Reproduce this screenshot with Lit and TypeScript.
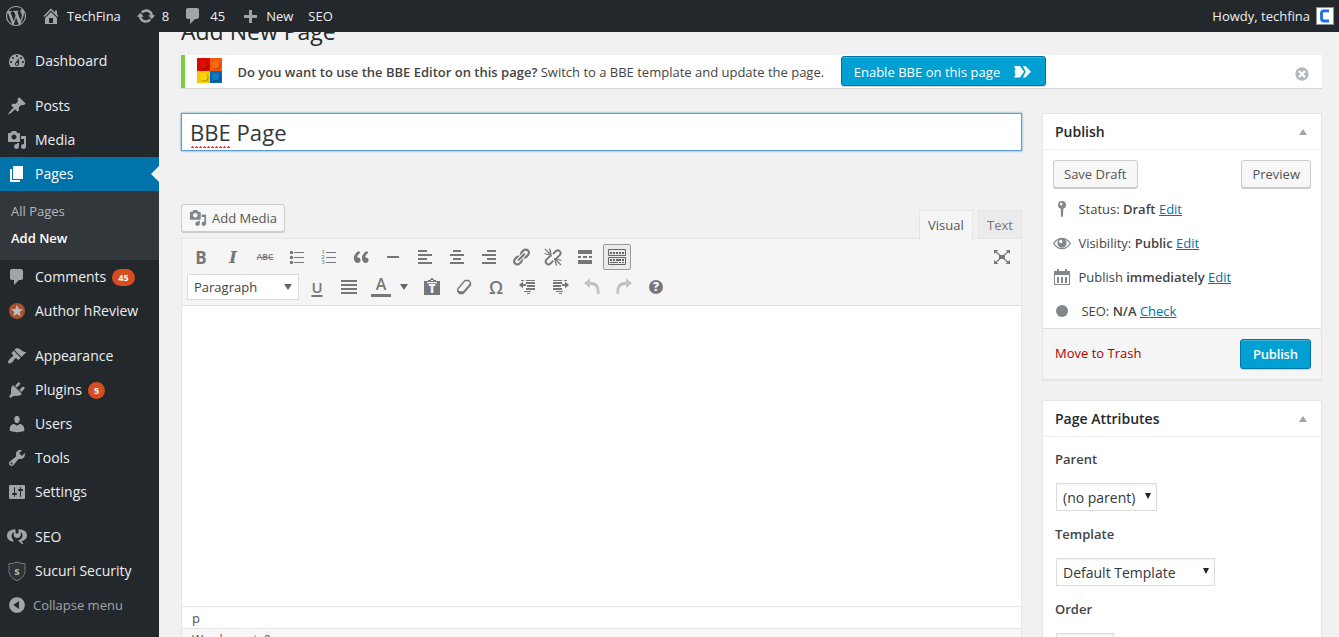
import { LitElement, html, svg, css } from "lit";
import { customElement } from "lit/decorators.js";
import { classMap } from "lit/directives/class-map.js";

const P: Record<string, string> = {
  wordpress: "M20 10c0-5.51-4.49-10-10-10C4.48 0 0 4.49 0 10c0 5.52 4.48 10 10 10 5.51 0 10-4.48 10-10zM7.78 15.37L4.37 6.22c.55-.02 1.17-.08 1.17-.08.5-.06.44-1.13-.06-1.11 0 0-1.45.11-2.37.11-.18 0-.37 0-.58-.01C4.12 2.69 6.87 1.11 10 1.11c2.33 0 4.45.87 6.05 2.34-.68-.11-1.65.39-1.65 1.58 0 .74.45 1.36.9 2.1.35.61.55 1.36.55 2.46 0 1.49-1.4 5-1.4 5l-3.03-8.37c.54-.02.82-.17.82-.17.5-.05.44-1.25-.06-1.22 0 0-1.44.12-2.38.12-.87 0-2.33-.12-2.33-.12-.5-.03-.56 1.2-.06 1.22l.92.08 1.26 3.41zM17.41 10c.24-.64.74-1.87.43-4.25.7 1.29 1.05 2.71 1.05 4.25 0 3.29-1.73 6.24-4.4 7.78.97-2.59 1.94-5.2 2.92-7.78zM6.1 18.09C3.12 16.65 1.11 13.53 1.11 10c0-1.3.23-2.48.72-3.59C3.25 10.3 4.67 14.2 6.1 18.09zm4.03-6.63l2.58 6.98c-.86.29-1.76.45-2.71.45-.79 0-1.57-.11-2.29-.33.81-2.38 1.62-4.74 2.42-7.1z",
  home: "M16 8.5l1.53 1.53-1.06 1.06L10 4.6l-6.47 6.49-1.06-1.06L10 2.5l4 4v-2h2v4zm-6-2.46l6 5.99V18H4v-5.97zM12 17v-5H8v5h4z",
  update: "M10.2 3.28c3.53 0 6.43 2.61 6.92 6h2.08l-3.5 4-3.5-4h2.32c-.45-1.97-2.21-3.45-4.32-3.45-1.45 0-2.73.71-3.54 1.78L4.95 5.66C6.23 4.2 8.11 3.28 10.2 3.28zm-.4 13.44c-3.52 0-6.43-2.61-6.92-6H.8l3.5-4c1.17 1.33 2.33 2.67 3.5 4H5.48c.45 1.97 2.21 3.45 4.32 3.45 1.45 0 2.73-.71 3.54-1.78l1.71 1.95c-1.28 1.46-3.15 2.38-5.25 2.38z",
  comments: "M5 2h9c1.1 0 2 .9 2 2v7c0 1.1-.9 2-2 2h-2l-5 5v-5H5c-1.1 0-2-.9-2-2V4c0-1.1.9-2 2-2z",
  plus: "M17 9v3h-5v5H9v-5H4V9h5V4h3v5h5z",
  dashboard: "M3.76 16h12.48c1.1-1.37 1.76-3.11 1.76-5 0-4.42-3.58-8-8-8s-8 3.58-8 8c0 1.89.66 3.63 1.76 5zM10 4c.55 0 1 .45 1 1s-.45 1-1 1-1-.45-1-1 .45-1 1-1zM6 6c.55 0 1 .45 1 1s-.45 1-1 1-1-.45-1-1 .45-1 1-1zm8 0c.55 0 1 .45 1 1s-.45 1-1 1-1-.45-1-1 .45-1 1-1zm-5.37 5.55L12 7v6c0 1.1-.9 2-2 2s-2-.9-2-2c0-.57.24-1.08.63-1.45zM4 10c.55 0 1 .45 1 1s-.45 1-1 1-1-.45-1-1 .45-1 1-1zm12 0c.55 0 1 .45 1 1s-.45 1-1 1-1-.45-1-1 .45-1 1-1zm-5 3c0-.55-.45-1-1-1s-1 .45-1 1 .45 1 1 1 1-.45 1-1z",
  post: "M10.44 3.02l1.82-1.82 6.36 6.35-1.83 1.82c-1.05-.68-2.48-.57-3.41.36l-.75.75c-.92.93-1.04 2.35-.35 3.41l-1.83 1.82-2.41-2.41-2.8 2.79c-.42.42-3.38 2.71-3.8 2.29s1.86-3.39 2.28-3.81l2.79-2.79L4.1 9.36l1.83-1.82c1.05.69 2.48.57 3.4-.36l.75-.75c.93-.92 1.05-2.35.36-3.41z",
  media: "M13 11V4c0-.55-.45-1-1-1h-1.67L9 1H5L3.67 3H2c-.55 0-1 .45-1 1v7c0 .55.45 1 1 1h10c.55 0 1-.45 1-1zM7 4.5c1.38 0 2.5 1.12 2.5 2.5S8.38 9.5 7 9.5 4.5 8.38 4.5 7 5.62 4.5 7 4.5zM14 6h5v10.5c0 1.38-1.12 2.5-2.5 2.5S14 17.88 14 16.5s1.12-2.5 2.5-2.5c.17 0 .34.02.5.05V9h-3V6zm-4 8.05V13h2v3.5c0 1.38-1.12 2.5-2.5 2.5S7 17.88 7 16.5 8.12 14 9.5 14c.17 0 .34.02.5.05z",
  page: "M6 15V2h10v13H6zm-1 1h8v2H3V5h2v11z",
  appearance: "M14.48 11.06L7.41 3.99l1.5-1.5c.5-.56 2.3-.47 3.51.32 1.21.8 1.43 1.28 2.91 2.1 1.18.64 2.45 1.26 4.45.85zm-.71.71L6.7 4.7 4.93 6.47c-.39.39-.39 1.02 0 1.41l1.06 1.06c.39.39.39 1.03 0 1.42-.6.6-1.43 1.11-2.21 1.69-.35.26-.7.53-1.01.84C1.43 14.23.4 16.08 1.4 17.07c.99 1 2.84-.03 4.18-1.36.31-.31.58-.66.85-1.02.57-.78 1.08-1.61 1.69-2.21.39-.39 1.02-.39 1.41 0l1.06 1.06c.39.39 1.02.39 1.41 0z",
  plugins: "M13.11 4.36L9.87 7.6 8 5.73l3.24-3.24c.35-.34 1.05-.2 1.56.32.52.51.66 1.21.31 1.55zm-8 1.77l.91-1.12 9.01 9.01-1.19.84c-.71.71-2.63 1.16-3.82 1.16H6.14L4.9 17.26c-.59.59-1.54.59-2.12 0-.59-.58-.59-1.53 0-2.12l1.24-1.24v-3.88c0-1.13.4-3.19 1.09-3.89zm7.26 3.97l3.24-3.24c.34-.35 1.04-.21 1.55.31.52.51.66 1.21.31 1.55l-3.24 3.25z",
  users: "M10 9.25c-2.27 0-2.73-3.44-2.73-3.44C7 4.02 7.82 2 9.97 2c2.16 0 2.98 2.02 2.71 3.81 0 0-.41 3.44-2.68 3.44zm0 2.57L12.72 10c2.39 0 4.52 2.33 4.52 4.53v2.49s-3.65 1.13-7.24 1.13c-3.65 0-7.24-1.13-7.24-1.13v-2.49c0-2.25 1.94-4.48 4.47-4.48z",
  tools: "M16.68 9.77c-1.34 1.34-3.3 1.67-4.95.99l-5.41 6.52c-.99.99-2.59.99-3.58 0s-.99-2.59 0-3.57l6.52-5.42c-.68-1.65-.35-3.61.99-4.95 1.28-1.28 3.12-1.62 4.72-1.06l-2.89 2.89 2.82 2.82 2.86-2.87c.53 1.58.18 3.39-1.08 4.65zM3.81 16.21c.4.39 1.04.39 1.43 0 .4-.4.4-1.04 0-1.43-.39-.4-1.03-.4-1.43 0-.39.39-.39 1.03 0 1.43z",
  settings: "M18 16V4c0-.55-.45-1-1-1H3c-.55 0-1 .45-1 1v12c0 .55.45 1 1 1h14c.55 0 1-.45 1-1zM8 11h1c.55 0 1 .45 1 1s-.45 1-1 1H8v1.5c0 .28-.22.5-.5.5s-.5-.22-.5-.5V13H6c-.55 0-1-.45-1-1s.45-1 1-1h1V5.5c0-.28.22-.5.5-.5s.5.22.5.5V11zm5-2h-1c-.55 0-1-.45-1-1s.45-1 1-1h1V5.5c0-.28.22-.5.5-.5s.5.22.5.5V7h1c.55 0 1 .45 1 1s-.45 1-1 1h-1v5.500c0 .28-.22.5-.5.5s-.5-.22-.5-.5V9z",
  collapse: "M10 2.16c4.33 0 7.84 3.51 7.84 7.84s-3.51 7.84-7.84 7.84S2.16 14.33 2.16 10 5.71 2.16 10 2.16zm2 11.72V6.12L6.18 9.97z",
  link: "M17.74 2.76c1.68 1.69 1.68 4.41 0 6.1l-1.53 1.52c-1.12 1.12-2.7 1.47-4.14 1.09l2.62-2.61.76-.77.76-.76c.84-.84.84-2.2 0-3.04-.84-.85-2.2-.85-3.04 0l-.77.76-3.38 3.38c-.37-1.44-.02-3.02 1.1-4.14l1.52-1.53c1.69-1.68 4.42-1.68 6.1 0zM8.59 13.43l5.34-5.34c.42-.42.42-1.1 0-1.52-.44-.43-1.13-.39-1.53 0l-5.33 5.34c-.42.42-.42 1.1 0 1.52.44.43 1.13.39 1.52 0zm-.76 2.29l4.14-4.15c.38 1.44.03 3.02-1.09 4.14l-1.52 1.53c-1.69 1.68-4.41 1.68-6.1 0-1.68-1.68-1.68-4.42 0-6.1l1.53-1.52c1.12-1.12 2.7-1.47 4.14-1.1l-4.14 4.15c-.85.84-.85 2.2 0 3.05.84.84 2.2.84 3.04 0z",
  quote: "M9.49 13.22c0-.74-.2-1.38-.61-1.9-.62-.78-1.83-.88-2.53-.72-.29-1.65 1.11-3.75 2.92-4.65L7.88 4c-2.73 1.3-5.42 4.28-4.96 8.05C3.21 14.43 4.59 16 6.54 16c.85 0 1.56-.25 2.12-.75s.83-1.18.83-2.03zm8.05 0c0-.74-.2-1.38-.61-1.9-.63-.78-1.83-.88-2.53-.72-.29-1.65 1.11-3.75 2.92-4.65L15.93 4c-2.73 1.3-5.41 4.28-4.95 8.05.29 2.38 1.66 3.95 3.61 3.95.85 0 1.56-.25 2.12-.75s.83-1.18.83-2.03z",
};

/** Wraps 20-unit artwork in an icon box. */
const box = (body: unknown, size = 20) =>
  html`<svg class="ic" width=${size} height=${size} viewBox="0 0 20 20" fill="currentColor">${body}</svg>`;
const ic = (name: string, size = 20) => box(svg`<path fill-rule="evenodd" d=${P[name]}></path>`, size);
/** Pixel-aligned bars: [x, y, width, height]. */
const bars = (list: number[][]) =>
  svg`<g shape-rendering="crispEdges">${list.map(([x, y, w, h]) => svg`<rect x=${x} y=${y} width=${w} height=${h}></rect>`)}</g>`;

const art = {
  yoast: box(svg`<path d="M6.500 15Q0 13.500 0 8.700Q0 2.200 8.500 2.200V6l1.500.8 1.500-.8V2.200Q20 2.300 20 8.700Q20 12.500 14.500 14.300L16.500 17l-1.300.3L11 13.500Q15.500 12 15.500 8.500Q15.500 6.200 13.700 5V9Q12.500 11 10 11T6.800 9V5Q4.500 6.300 4.500 9Q4.500 11.800 6 12.500Z"></path>`),
  review: box(svg`<circle cx="10" cy="10" r="8" fill="#a9502f"></circle><path fill="#b9bdc0" d="M10 3.800l1.700 4.100 4.400.3-3.400 2.800 1.100 4.300L10 13l-3.800 2.300L7.300 11 3.900 8.200l4.400-.3z"></path>`),
  sucuri: box(svg`<path d="M2 2.500Q6 2.800 10 .800Q14 2.800 18 2.500V11Q17.500 17 10 20.300Q2.500 17 2 11Z" transform="translate(0 .2) scale(1 .96)" fill="#303234" stroke="#777b7e"></path><text x="10" y="14" text-anchor="middle" font-family="Open Sans" font-weight="700" font-size="11" fill="#b4b7b9">s</text>`),
  ul: box(svg`<circle cx="4.500" cy="5.500" r="1.700"></circle><circle cx="4.500" cy="10.500" r="1.700"></circle><circle cx="4.500" cy="15.500" r="1.700"></circle>${bars([[7, 5, 10, 1], [7, 10, 10, 1], [7, 15, 10, 1]])}`),
  ol: box(svg`<g font-family="Open Sans" font-size="5.500" font-weight="600"><text x="2.500" y="7">1</text><text x="2.500" y="12.200">2</text><text x="2.500" y="17.400">3</text></g>${bars([[7, 5, 10, 1], [7, 10, 10, 1], [7, 15, 10, 1]])}`),
  hr: box(bars([[4, 9, 12, 2]])),
  left: box(bars([[3, 3, 9, 2], [3, 7, 14, 2], [3, 11, 9, 2], [3, 15, 14, 2]])),
  center: box(bars([[6, 3, 8, 2], [3, 7, 14, 2], [6, 11, 8, 2], [3, 15, 14, 2]])),
  right: box(bars([[8, 3, 9, 2], [3, 7, 14, 2], [8, 11, 9, 2], [3, 15, 14, 2]])),
  justify: box(bars([[2, 3, 16, 2], [2, 7, 16, 2], [2, 11, 16, 2], [2, 15, 16, 2]])),
  unlink: box(svg`<g fill="none" stroke="currentColor" stroke-width="1.900"><path d="M10 7l3-3q2-1.500 3.700.2t.2 3.800l-3.400 3.400q-1 .8-2.200.6"></path><path d="M8.700 8.600q-1.200 0-2 .8l-3.400 3.400q-1.500 2 .2 3.700t3.800.2l3-3"></path></g><g stroke="currentColor" stroke-width="1.300"><path d="M2 2l6.500 6.500M6.500 1.500l1.500 5.500M1.500 6.500l5 1.500M18 18l-6.500-6.500M13.500 18.500l-1.500-5.500M18.500 13.500l-5-1.500"></path></g>`),
  more: box(bars([[3, 3, 14, 4], [3, 9, 3, 2], [8, 9, 4, 2], [14, 9, 3, 2], [3, 13, 14, 4]])),
  kitchen: box(svg`<path fill="none" stroke="currentColor" d="M1.500 2.500h17v6h-17zM1.500 10.500h17v7h-17z"></path>${bars([[3, 5, 2, 2], [6, 5, 2, 2], [9, 5, 2, 2], [12, 5, 2, 2], [15, 5, 2, 2], [3, 12, 2, 2], [6, 12, 2, 2], [9, 12, 5, 2], [15, 12, 2, 2], [3, 15, 8, 1], [12, 15, 2, 1], [15, 15, 2, 1]])}`),
  full: box(svg`<path d="M2 3h4.500L2 7zM18 3h-4.500L18 7zM2 17h4.500L2 13zM18 17h-4.500l4.500-4z"></path><path stroke="currentColor" stroke-width="1.200" d="M3 4l14 12M17 4L3 16"></path>${bars([[7, 8, 6, 4]])}`),
  paste: box(svg`<path fill-rule="evenodd" d="M2 4h4V3h2q.3-2 2-2t2 2h2v1h4v14H2zM9 3h2v1H9zM5 5v1.200h10V5z"></path><text x="10" y="16" text-anchor="middle" font-family="Open Sans" font-weight="800" font-size="12" fill="#f5f5f5">T</text>`),
  eraser: box(svg`<path fill="none" stroke="currentColor" stroke-width="1.300" stroke-linejoin="round" d="M11 3.500h3.500L16.500 5.500V8L9 16.500H5.500L3.700 14.500V12z"></path><path d="M3.700 12.500l1.800 1.800h3.700l7-8V8L9 16.500H5.500L3.700 14.500z"></path>`),
  outdent: box(svg`<path d="M1 8l4-3.500V7h3v2H5v2.500z"></path>${bars([[8, 3, 9, 1], [8, 5, 9, 2], [9, 8, 8, 2], [8, 11, 9, 2], [6, 14, 7, 1], [9, 16, 3, 1], [3, 3, 3, 1]])}`),
  indent: box(svg`<path d="M19 8l-4-3.500V7h-3v2h3v2.500z"></path>${bars([[3, 3, 9, 1], [3, 5, 9, 2], [3, 8, 8, 2], [3, 11, 9, 2], [6, 14, 7, 1], [9, 16, 3, 1], [14, 3, 3, 1]])}`),
  undo: box(svg`<path d="M2 6l6-4.500V4.800c6 0 9.500 3.200 9.500 9V17h-2.700v-3c0-4-2.800-6-6.800-6v3z"></path>`),
  redo: box(svg`<path d="M18 6l-6-4.500V4.800c-6 0-9.500 3.200-9.500 9V17h2.700v-3c0-4 2.800-6 6.800-6v3z"></path>`),
  help: box(svg`<circle cx="10" cy="10" r="7"></circle><text x="10" y="14.400" text-anchor="middle" font-family="Open Sans" font-weight="800" font-size="12" fill="#f5f5f5">?</text>`),
  pin: box(svg`<path fill-rule="evenodd" d="M10 2a4 4 0 0 1 1.300 7.800L11 17l-1 1.500L9 17l-.3-7.200A4 4 0 0 1 10 2zM9.200 3.800a1.300 1.300 0 1 0 .01 0z"></path>`),
  eye: box(svg`<path fill="none" stroke="currentColor" stroke-width="1.300" d="M1.700 10.500Q5 5.300 10 5.300T18.300 10.500Q15 15.700 10 15.700T1.700 10.500z"></path><path fill-rule="evenodd" d="M10 5.500a4.600 4.600 0 1 0 .01 0zM8.800 6.800a1.700 1.700 0 1 1-.01 0z"></path>`),
  calendar: box(bars([[2, 4, 16, 4], [2, 8, 1, 10], [17, 8, 1, 10], [2, 17, 16, 1], [5, 2, 2, 3], [13, 2, 2, 3], [5, 10, 2, 6], [9, 10, 2, 6], [13, 10, 2, 6]])),
  dot: box(svg`<circle cx="10" cy="10" r="6"></circle>`),
  dismiss: box(svg`<circle cx="10" cy="10" r="6.700"></circle><path stroke="#fff" stroke-width="2.200" d="M7 7l6 6M13 7l-6 6"></path>`),
  arrows: box(svg`<path d="M2 4h6l4 5.700-4 5.800H2l1.500-3L2.500 10l1-3zM11 4h2.500l5.500 5.700-5.500 5.800H11l2.700-5.800z"></path>`),
};

interface Item { label: string; icon: unknown; badge?: string; sep?: boolean; on?: boolean }
const MENU: Item[] = [
  { label: "Dashboard", icon: ic("dashboard") },
  { label: "Posts", icon: ic("post"), sep: true },
  { label: "Media", icon: ic("media") },
  { label: "Pages", icon: ic("page"), on: true },
  { label: "Comments", icon: ic("comments"), badge: "45" },
  { label: "Author hReview", icon: art.review },
  { label: "Appearance", icon: ic("appearance"), sep: true },
  { label: "Plugins", icon: ic("plugins"), badge: "5" },
  { label: "Users", icon: ic("users") },
  { label: "Tools", icon: ic("tools") },
  { label: "Settings", icon: ic("settings") },
  { label: "SEO", icon: art.yoast, sep: true },
  { label: "Sucuri Security", icon: art.sucuri },
];

@customElement("app-root")
export class AppRoot extends LitElement {
  static styles = css`
    :host { display: block; height: 637px; overflow: hidden; background: #f1f1f1; color: #444; font: 13px/18px "Open Sans", sans-serif; }
    * { box-sizing: border-box; }
    .ic { display: block; flex: none; }
    .adminbar { height: 32px; background: #23282d; color: #eee; display: flex; align-items: center; padding-left: 6px; padding-right: 5px; }
    .adminbar .ic { color: #a0a5aa; }
    .adminbar .home { margin: 0 6px 0 15px; }
    .adminbar .upd { margin: 0 6px 0 15px; }
    .adminbar .com { margin: 0 7px 0 14px; }
    .adminbar .add { margin: 0 6px 0 15px; }
    .adminbar .seo { margin-left: 15px; }
    .howdy { margin-left: auto; display: flex; align-items: center; gap: 6px; }
    .avatar { display: block; width: 18px; height: 18px; }
    .layout { display: flex; height: 605px; overflow: hidden; }
    .menu { width: 159px; flex: none; background: #23282d; padding-top: 12px; }
    .item { height: 34px; display: flex; align-items: center; padding-left: 7px; gap: 8px; color: #eee; font-size: 14px; position: relative; white-space: nowrap; }
    .item .ic { color: #a0a5aa; }
    .sep { margin-top: 11px; }
    .on { background: #0073aa; color: #fff; }
    .item.on .ic { color: #fff; }
    .on::after { content: ""; position: absolute; right: 0; top: 9px; border: 8px solid transparent; border-right-color: #f1f1f1; border-left: 0; }
    .badge { background: #d54e21; color: #fff; font-size: 9px; line-height: 17px; font-weight: 700; border-radius: 10px; padding: 0 6px; margin-left: -2px; }
    .sub { background: #32373c; height: 69px; padding: 7px 11px; color: #b4b9be; line-height: 27px; }
    .sub .cur { color: #fff; font-weight: 600; }
    .item.collapse { color: #a0a5aa; font-size: 13px; gap: 6px; }
    .main { flex: 1; min-width: 0; padding: 0 17px 0 22px; }
    .heading { margin: 0; height: 23px; padding-bottom: 9px; display: flex; align-items: flex-end; font-size: 23px; font-weight: 400; line-height: 29px; color: #23282d; }
    .notice { height: 33px; background: #fff; border-left: 4px solid #7ad03a; box-shadow: 0 1px 1px rgba(0,0,0,.1); display: flex; align-items: center; padding: 0 10px 0 12px; white-space: nowrap; }
    .brick { display: block; flex: none; margin: -3px 15.500px 0 0; }
    .notice .msg { margin-top: 1px; }
    b { font-weight: 600; }
    .btn { display: flex; align-items: center; border: 1px solid #ccc; border-radius: 3px; background: #f7f7f7; color: #555; height: 28px; padding: 0 10px; box-shadow: 0 1px 0 #ccc; white-space: nowrap; }
    .primary { background: #00a0d2; border-color: #0073aa; color: #fff; height: 30px; padding: 0 12px; box-shadow: inset 0 1px 0 rgba(120,200,230,.5), 0 1px 0 rgba(0,0,0,.15); }
    .enable { margin: -2px 0 0 16.500px; width: 205px; gap: 12px; line-height: 20px; padding-top: 2px; letter-spacing: .03px; }
    .x { margin: 4px 0 0 auto; color: #b4b9be; }
    .cols { display: flex; gap: 20px; padding-top: 25px; align-items: flex-start; }
    .left { width: 841px; flex: none; }
    .title { height: 38px; border: 1px solid #5b9dd9; background: #fff; box-shadow: 0 0 2px rgba(30,140,190,.8); font-size: 22.100px; line-height: 36px; padding-left: 8px; color: #32373c; }
    .miss { padding-bottom: 1px; background: conic-gradient(from 135deg at 50% 0, #e23b3b 25%, transparent 0) 0 100% / 4px 2px repeat-x; }
    .tools { display: flex; justify-content: space-between; align-items: flex-end; height: 88px; padding-top: 53px; }
    .addm { width: 104px; padding: 0 7px; gap: 5px; margin-bottom: 7px; }
    .addm .ic { color: #82878c; }
    .tabs { display: flex; gap: 5px; align-items: flex-start; height: 29px; }
    .tab { width: 44px; height: 28px; border: 1px solid #e5e5e5; border-bottom: 0; background: #ebebeb; color: #777; padding: 5px 0 0 8px; }
    .tab.vis { width: 54px; background: #f5f5f5; color: #555; height: 30px; position: relative; }
    .editor { border: 1px solid #e5e5e5; height: 410px; margin-top: -1px; background: #fff; }
    .bar { height: 67px; background: #f5f5f5; border-bottom: 1px solid #ddd; padding: 3px 3px 0; color: #777; }
    .row { display: flex; height: 30px; align-items: center; }
    .cell { width: 32px; height: 26px; display: flex; align-items: center; justify-content: center; flex: none; }
    .glyph { font: 700 17px/26px "Open Sans", sans-serif; padding-top: 1px; }
    .it { font: italic 700 17px/26px "DejaVu Serif", serif; }
    .abc { font: 600 8.500px/26px "Open Sans", sans-serif; text-decoration: line-through; }
    .ul { font-weight: 600; font-size: 15px; text-decoration: underline 2px; text-underline-offset: 2px; }
    .om { font-size: 18px; font-weight: 600; }
    .active { width: 28px; margin: 0 2px; border: 1px solid #999; border-radius: 2px; background: #ebebeb; color: #666; }
    .fs { margin-left: auto; }
    .fmt { width: 112px; height: 26px; margin: 0 2px; background: #fff; border: 1px solid #ddd; color: #444; display: flex; align-items: center; justify-content: space-between; padding: 0 6px; }
    .tri { border: 4.500px solid transparent; border-top: 6px solid #666; border-bottom: 0; }
    .fc { width: 51px; height: 26px; display: flex; align-items: center; padding-left: 6px; gap: 9px; }
    .fa { width: 20px; height: 20px; border-bottom: 3px solid #777; text-align: center; font-size: 16px; line-height: 15px; font-weight: 600; }
    .dim { opacity: .4; }
    .canvas { height: 300px; }
    .path { height: 22px; border-top: 1px solid #e5e5e5; padding: 1px 10px; color: #555; line-height: 20px; }
    .wc { border-top: 1px solid #e5e5e5; background: #f7f7f7; font-size: 12px; padding: 2px 10px; height: 22px; color: #555; }
    .side { width: 280px; display: flex; flex-direction: column; gap: 20px; }
    .card { background: #fff; border: 1px solid #e5e5e5; box-shadow: 0 1px 1px rgba(0,0,0,.04); }
    .head { height: 36px; border-bottom: 1px solid #eee; padding: 0 14px 0 12px; display: flex; align-items: center; justify-content: space-between; font-size: 14px; font-weight: 600; color: #23282d; }
    .up { border: 4.500px solid transparent; border-bottom: 6px solid #a0a5aa; border-top: 0; }
    .acts { display: flex; justify-content: space-between; padding: 10px 10px 4px; }
    .misc { height: 34px; display: flex; align-items: center; padding: 0 9px; gap: 6.400px; }
    .misc .ic { color: #82878c; }
    .misc .dotted { margin-left: 3px; }
    .link { color: #0073aa; text-decoration: underline; }
    .foot { height: 51px; background: #f5f5f5; border-top: 1px solid #ddd; display: flex; justify-content: space-between; align-items: center; padding: 0 10px 0 12px; color: #a00; }
    .trash { margin-top: -2px; }
    .foot .primary { font-weight: 600; letter-spacing: -.2px; width: 71px; padding: 0 0 0 12px; }
    .attrs { padding: 13px 12px; }
    .lab { font-weight: 600; height: 18px; margin-bottom: 15px; }
    .sel { width: 101px; height: 28px; border: 1px solid #ddd; box-shadow: inset 0 1px 2px rgba(0,0,0,.07); font-size: 14px; color: #32373c; display: flex; align-items: center; justify-content: space-between; padding: 1px 5px 0 6px; margin: 0 0 14px 1px; white-space: nowrap; }
    .sel .tri { border-width: 6px 3.500px 0; border-top-color: #222; margin-top: -3px; }
    .sel.wide { width: 159px; }
    .sel.num { width: 58px; }
  `;

  private entry(m: Item) {
    return html`<div class=${classMap({ item: true, sep: !!m.sep, on: !!m.on })}>${m.icon}<span>${m.label}</span>${m.badge ? html`<span class="badge">${m.badge}</span>` : ""}</div>
      ${m.on ? html`<div class="sub"><div>All Pages</div><div class="cur">Add New</div></div>` : ""}`;
  }

  render() {
    const cell = (x: unknown) => html`<div class="cell">${x}</div>`;
    return html`
      <div class="adminbar">
        ${ic("wordpress")}
        <span class="home">${ic("home")}</span><span>TechFina</span>
        <span class="upd">${ic("update")}</span><span>8</span>
        <span class="com">${ic("comments")}</span><span>45</span>
        <span class="add">${ic("plus")}</span><span>New</span>
        <span class="seo">SEO</span>
        <span class="howdy">Howdy, techfina
          <svg class="avatar" viewBox="0 0 18 18"><rect x=".5" y=".5" width="17" height="17" fill="#fff" stroke="#8c8f94"></rect><path d="M13 3.800H8Q5.500 3.800 5.500 6.300V11.500q0 2.500 2.500 2.500H13" fill="none" stroke="#176fea" stroke-width="2.800"></path></svg>
        </span>
      </div>
      <div class="layout">
        <nav class="menu">
          ${MENU.map((m) => this.entry(m))}
          <div class="item collapse">${ic("collapse")}<span>Collapse menu</span></div>
        </nav>
        <main class="main">
          <h1 class="heading">Add New Page</h1>
          <div class="notice">
            <svg class="brick" width="25" height="25" viewBox="0 0 25 25">
              <rect width="13" height="13" fill="#d90b05"></rect><rect x="13" width="12" height="13" fill="#f4590b"></rect>
              <rect y="13" width="13" height="12" fill="#f5cb00"></rect><rect x="13" y="13" width="12" height="12" fill="#0b65b5"></rect>
              <g fill="#0004"><circle cx="7.500" cy="7.500" r="4"></circle><circle cx="19.500" cy="7.500" r="4"></circle><circle cx="7.500" cy="19.500" r="4"></circle><circle cx="19.500" cy="19.500" r="4"></circle></g>
              <circle cx="6.700" cy="6.700" r="3.800" fill="#dc0f07"></circle><circle cx="18.700" cy="6.700" r="3.800" fill="#fb6a10"></circle><circle cx="6.700" cy="18.700" r="3.800" fill="#f9d40c"></circle><circle cx="18.700" cy="18.700" r="3.800" fill="#107ac8"></circle>
            </svg>
            <span class="msg"><b>Do you want to use the BBE Editor on this page?</b> Switch to a BBE template and update the page.</span>
            <div class="btn primary enable">Enable BBE on this page ${art.arrows}</div>
            <span class="x">${art.dismiss}</span>
          </div>
          <div class="cols">
            <section class="left">
              <div class="title"><span class="miss">BBE</span> Page</div>
              <div class="tools">
                <div class="btn addm">${ic("media", 18)}<span>Add Media</span></div>
                <div class="tabs"><div class="tab vis">Visual</div><div class="tab">Text</div></div>
              </div>
              <div class="editor">
                <div class="bar">
                  <div class="row">
                    ${cell(html`<span class="glyph">B</span>`)}${cell(html`<span class="it">I</span>`)}${cell(html`<span class="abc">ABC</span>`)}
                    ${[art.ul, art.ol, ic("quote"), art.hr, art.left, art.center, art.right, ic("link"), art.unlink, art.more].map(cell)}
                    <div class="cell active">${art.kitchen}</div>
                    <div class="cell fs">${art.full}</div>
                  </div>
                  <div class="row">
                    <div class="fmt">Paragraph<span class="tri"></span></div>
                    ${cell(html`<span class="ul">U</span>`)}${cell(art.justify)}
                    <div class="fc"><span class="fa">A</span><span class="tri"></span></div>
                    ${[art.paste, art.eraser, html`<span class="om">Ω</span>`, art.outdent, art.indent, html`<span class="dim">${art.undo}</span>`, html`<span class="dim">${art.redo}</span>`, art.help].map(cell)}
                  </div>
                </div>
                <div class="canvas"></div>
                <div class="path">p</div>
                <div class="wc">Word count: 0</div>
              </div>
            </section>
            <aside class="side">
              <div class="card">
                <div class="head">Publish<span class="up"></span></div>
                <div class="acts"><div class="btn">Save Draft</div><div class="btn">Preview</div></div>
                <div class="misc">${art.pin}<span>Status: <b>Draft</b> <span class="link">Edit</span></span></div>
                <div class="misc">${art.eye}<span>Visibility: <b>Public</b> <span class="link">Edit</span></span></div>
                <div class="misc">${art.calendar}<span>Publish <b>immediately</b> <span class="link">Edit</span></span></div>
                <div class="misc">${art.dot}<span class="dotted">SEO: <b>N/A</b> <span class="link">Check</span></span></div>
                <div class="foot"><span class="trash">Move to Trash</span><div class="btn primary">Publish</div></div>
              </div>
              <div class="card">
                <div class="head">Page Attributes<span class="up"></span></div>
                <div class="attrs">
                  <div class="lab">Parent</div><div class="sel">(no parent)<span class="tri"></span></div>
                  <div class="lab">Template</div><div class="sel wide">Default Template<span class="tri"></span></div>
                  <div class="lab">Order</div><div class="sel num"></div>
                </div>
              </div>
            </aside>
          </div>
        </main>
      </div>`;
  }
}
